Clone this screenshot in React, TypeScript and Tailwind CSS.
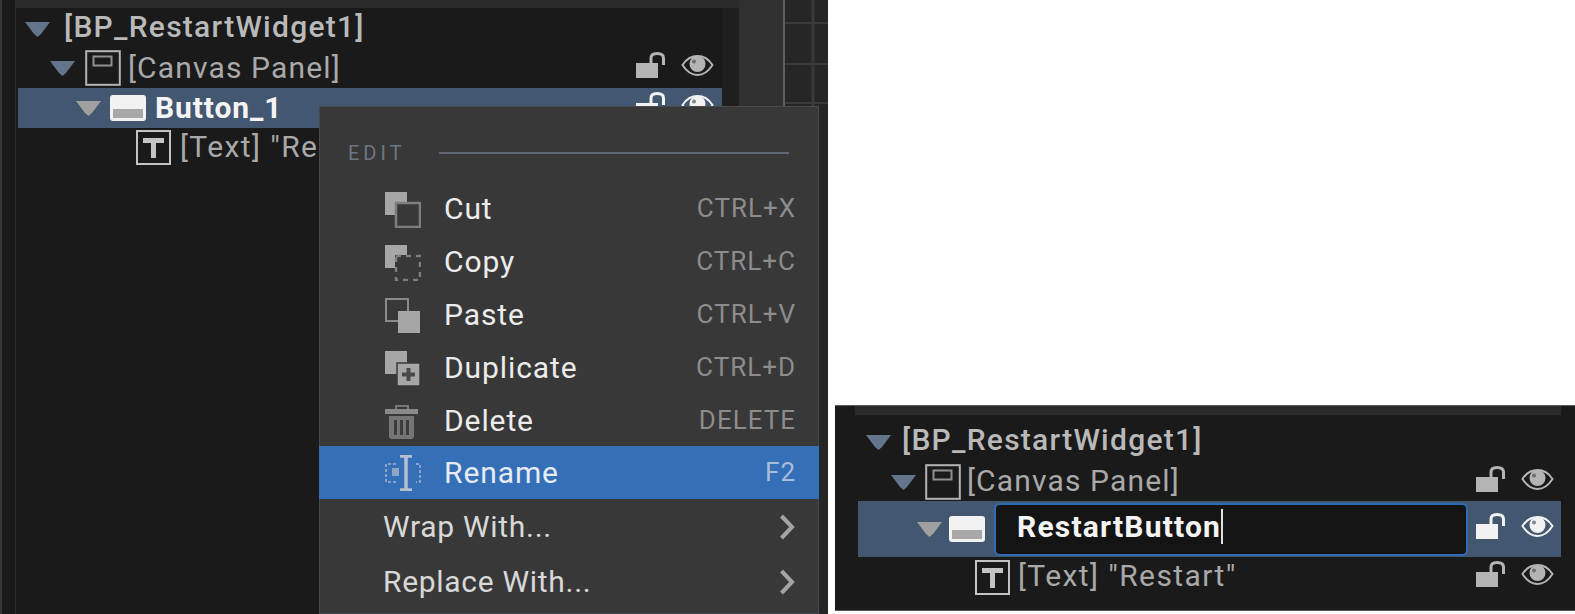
import React from "react";

const Tri = ({ c = "#64748a", w = 25 }: { c?: string; w?: number }) => (
  <svg width={w} height={16} viewBox="0 0 25 16" className="shrink-0">
    <path d="M0 1h25L16 13l-3.500 3L9 13z" fill={c} />
  </svg>
);

const CanvasIcon = ({ w = 36, h = 36 }: { w?: number; h?: number }) => (
  <svg width={w} height={h} viewBox="0 0 36 36" className="shrink-0">
    <rect x="1.200" y="1.200" width="33.600" height="33.600" fill="none" stroke="#b4b4b4" strokeWidth="2" />
    <rect x="8.500" y="6.500" width="18" height="9" fill="none" stroke="#8f8f8f" strokeWidth="2" />
  </svg>
);

const ButtonIcon = ({ w = 36, h = 26 }: { w?: number; h?: number }) => (
  <svg width={w} height={h} viewBox="0 0 36 26" className="shrink-0">
    <rect x="0" y="0" width="36" height="26" rx="3" fill="#f2f2f2" />
    <path d="M3 14h30v9H3z" fill="#a8a8a8" />
  </svg>
);

const TextIcon = ({ w = 35, h = 35 }: { w?: number; h?: number }) => (
  <svg width={w} height={h} viewBox="0 0 35 35" className="shrink-0">
    <rect x="1" y="1" width="33" height="33" fill="none" stroke="#c4c4c4" strokeWidth="2" />
    <path d="M7 8h21v5h-8v15h-5V13H7z" fill="#c4c4c4" />
  </svg>
);

const Lock = ({ c = "#b4b4b4" }: { c?: string }) => (
  <svg width={30} height={26} viewBox="0 0 30 26" className="shrink-0">
    <rect x="0" y="11" width="22" height="15" fill={c} />
    <path d="M15 11V6C15 3 17 1.500 21 1.500S27.500 3 27.500 6V13" fill="none" stroke={c} strokeWidth="3" />
  </svg>
);

const Eye = ({ c = "#b4b4b4", hl = false }: { c?: string; hl?: boolean }) => (
  <svg width={33} height={24} viewBox="0 0 33 24" className="shrink-0">
    <path d="M1.500 12C6 5 11 3 16.500 3S27 5 31.500 12C27 19 22 22 16.500 22S6 19 1.500 12z" fill="none" stroke={c} strokeWidth="2" />
    <circle cx="16.500" cy="11" r="8" fill={c} />
    <circle cx="13" cy="8.500" r="2" fill={hl ? "#7b8794" : "#6e6e6e"} />
  </svg>
);

const Toggles = ({ c, hl }: { c?: string; hl?: boolean }) => (
  <div className="mb-[6px] flex items-center gap-[15px]">
    <Lock c={c} />
    <Eye c={c} hl={hl} />
  </div>
);

const CutIcon = () => (
  <svg width={36} height={36} viewBox="0 0 36 36">
    <rect x="0" y="0" width="22" height="23" fill="#a6a6a6" />
    <rect x="11" y="11" width="24" height="24" fill="#383838" stroke="#7e7e7e" strokeWidth="2.500" />
  </svg>
);
const CopyIcon = () => (
  <svg width={36} height={36} viewBox="0 0 36 36">
    <path d="M0 0h22v10H10v13H0z" fill="#a6a6a6" />
    <rect x="11" y="11" width="24" height="24" fill="none" stroke="#7e7e7e" strokeWidth="2.500" strokeDasharray="5 5" />
  </svg>
);
const PasteIcon = () => (
  <svg width={36} height={36} viewBox="0 0 36 36">
    <path d="M13 23H1V1h22v12" fill="none" stroke="#8a8a8a" strokeWidth="2" />
    <rect x="13" y="13" width="22" height="22" fill="#a6a6a6" />
  </svg>
);
const DuplicateIcon = () => (
  <svg width={36} height={36} viewBox="0 0 36 36">
    <rect x="0" y="0" width="22" height="23" fill="#a6a6a6" />
    <rect x="12" y="12" width="23" height="23" fill="#a6a6a6" stroke="#383838" strokeWidth="1.500" />
    <path d="M21.500 17h4v4.500H30v4h-4.500V30h-4v-4.500H17v-4h4.500z" fill="#4a4a4a" />
  </svg>
);
const TrashIcon = () => (
  <svg width={36} height={36} viewBox="0 0 36 36">
    <path d="M11 5V2h12v3" fill="none" stroke="#777" strokeWidth="2" />
    <rect x="0" y="5" width="33" height="5" fill="#8a8a8a" />
    <path d="M4 12h25v21l-2 2H6l-2-2z" fill="#757575" />
    <path d="M9 16h3v15H9zM15 16h3v15h-3zM21 16h3v15h-3z" fill="#3c3c3c" />
  </svg>
);
const RenameIcon = () => (
  <svg width={36} height={36} viewBox="0 0 36 36">
    <path d="M15 1h12M15 35h12M21 1v34" fill="none" stroke="#b5c0cf" strokeWidth="3.500" />
    <path d="M11 9H1v18h10" fill="none" stroke="#a5b4c8" strokeWidth="1.500" strokeDasharray="3 2" />
    <path d="M31 9h4v18h-4" fill="none" stroke="#a5b4c8" strokeWidth="1.500" strokeDasharray="3 2" />
    <rect x="7" y="13" width="7" height="8" fill="#8fa5c4" />
  </svg>
);

const Chevron = () => (
  <svg width={16} height={26} viewBox="0 0 16 26">
    <path d="M2.500 2 13 13 2.500 24" fill="none" stroke="#a4a4a4" strokeWidth="4" />
  </svg>
);

const items = [
  { label: "Cut", key: "CTRL+X", icon: <CutIcon /> },
  { label: "Copy", key: "CTRL+C", icon: <CopyIcon /> },
  { label: "Paste", key: "CTRL+V", icon: <PasteIcon /> },
  { label: "Duplicate", key: "CTRL+D", icon: <DuplicateIcon /> },
  { label: "Delete", key: "DELETE", icon: <TrashIcon /> },
];

const GridCanvas = () => (
  <svg width={45} height={614} viewBox="0 0 45 614" className="block shrink-0">
    <rect width="45" height="614" fill="#262626" />
    <path d="M30 0v614" stroke="#3a3a3a" strokeWidth="3" />
    <path d="M0 23h45M0 64h45M0 103h45" stroke="#3a3a3a" strokeWidth="2" />
    <path d="M1 0v614" stroke="#5b5f63" strokeWidth="2" />
  </svg>
);

export default function App() {
  return (
    <div className="flex h-[614px] w-[1575px] overflow-hidden bg-white font-['Roboto',sans-serif]">
      <div className="relative flex h-full w-[828px] shrink-0 bg-[#1a1a1a]">
        <div className="flex h-full w-[739px] shrink-0 flex-col border-l-2 border-[#363636]">
          <div className="ml-[13px] h-[8px] shrink-0 bg-[#2b2b2b]" />
          <div className="ml-[13px] flex flex-1">
            <div className="flex w-[707px] flex-col border-l border-[#2b2b2b] pt-[1px]">
              <div className="flex h-[39px] items-center pl-[9px] text-[30px] font-medium tracking-[1.260px] text-[#b9b9b9]">
                <Tri />
                <span className="mb-[4px] ml-[14px]">[BP_RestartWidget1]</span>
              </div>
              <div className="flex h-[40px] items-center pl-[34px] pr-[8px] text-[30px] tracking-[1.150px] text-[#a9a9a9]">
                <Tri />
                <span className="ml-[10px]"><CanvasIcon /></span>
                <span className="mb-[2px] ml-[7px]">[Canvas Panel]</span>
                <span className="ml-auto"><Toggles /></span>
              </div>
              <div className="ml-[2px] flex h-[40px] items-center bg-[#435870] pl-[58px] pr-[8px] text-[30px] font-bold tracking-[0.900px] text-[#f4f4f4]">
                <Tri c="#a0a0a0" />
                <span className="ml-[9px]"><ButtonIcon /></span>
                <span className="mb-[2px] ml-[9px]">Button_1</span>
                <span className="ml-auto"><Toggles c="#f2f2f2" hl /></span>
              </div>
              <div className="flex h-[38px] items-center pl-[120px] text-[30px] tracking-[1.400px] text-[#a9a9a9]">
                <TextIcon />
                <span className="mb-[2px] ml-[9px] w-[138px] overflow-hidden whitespace-nowrap">[Text] "Restart"</span>
              </div>
            </div>
            <div className="flex-1 bg-[#1f1f1f]" />
          </div>
        </div>
        <div className="h-full w-[44px] shrink-0 bg-[#303030]" />
        <GridCanvas />

        <div className="absolute left-[319px] top-[106px] h-[508px] w-[500px] overflow-hidden bg-[#383838] ring-1 ring-inset ring-[#454a50]">
          <div className="mt-[34px] flex h-[26px] items-center pl-[29px] pr-[30px]">
            <span className="text-[20px] tracking-[4px] text-[#6c7682]">EDIT</span>
            <div className="ml-[33px] h-[2px] flex-1 bg-[#5e6872]" />
          </div>
          <div className="mt-[16px]">
            {items.map((it) => (
              <div key={it.label} className="flex h-[52.800px] items-center pl-[66px] pr-[23px] pt-[4px]">
                <span className="w-[59px]">{it.icon}</span>
                <span className="mb-[3px] text-[30px] tracking-[0.900px] text-[#ececec]">{it.label}</span>
                <span className="mb-[3px] ml-auto text-[26px] tracking-[1px] text-[#8c8c8c]">{it.key}</span>
              </div>
            ))}
            <div className="flex h-[52.800px] items-center bg-[#356fb8] pl-[66px] pr-[23px] pt-[2px]">
              <span className="w-[59px]"><RenameIcon /></span>
              <span className="mb-[2px] text-[30px] tracking-[0.900px] text-[#e6ecf4]">Rename</span>
              <span className="mb-[2px] ml-auto text-[26px] tracking-[1px] text-[#a9bdd8]">F2</span>
            </div>
            <div className="flex h-[54px] items-center pl-[64px] pr-[24px] pt-[2px]">
              <span className="text-[30px] tracking-[0.700px] text-[#d8d8d8]">Wrap With...</span>
              <span className="ml-auto flex"><Chevron /></span>
            </div>
            <div className="flex h-[55px] items-center pl-[64px] pr-[24px] pt-[4px]">
              <span className="mb-[2px] text-[30px] tracking-[0.700px] text-[#d8d8d8]">Replace With...</span>
              <span className="ml-auto flex"><Chevron /></span>
            </div>
          </div>
        </div>
      </div>

      <div className="flex flex-1 flex-col justify-end pb-[3px] pl-[7px]">
        <div className="flex h-[206px] w-[740px] flex-col border-y border-[#5a5a5a] bg-[#1a1a1a]">
          <div className="ml-[20px] mr-[14px] h-[9px] shrink-0 bg-[#2b2b2b]" />
          <div className="mt-[6px] flex h-[41px] items-center pl-[31px] text-[30px] font-medium tracking-[1.260px] text-[#b9b9b9]">
            <Tri />
            <span className="mb-[4px] ml-[11px]">[BP_RestartWidget1]</span>
          </div>
          <div className="flex h-[39px] items-center pl-[56px] pr-[21px] text-[30px] tracking-[1.150px] text-[#a9a9a9]">
            <Tri />
            <span className="ml-[9px]"><CanvasIcon /></span>
            <span className="mb-[2px] ml-[6px]">[Canvas Panel]</span>
            <span className="ml-auto"><Toggles /></span>
          </div>
          <div className="ml-[23px] mr-[14px] flex h-[56px] items-center bg-[#435870] pl-[59px] pr-[7px]">
            <Tri c="#a0a0a0" />
            <span className="ml-[7px]"><ButtonIcon /></span>
            <div className="ml-[9px] flex h-[53px] w-[474px] items-center rounded-[6px] border-2 border-[#2d6bb5] bg-[#141414] pb-[5px] pl-[21px] text-[30px] font-bold tracking-[1.200px] text-[#f4f4f4]">
              RestartButton
              <span className="h-[35px] w-[1.500px] bg-[#e0e0e0]" />
            </div>
            <span className="ml-auto"><Toggles c="#f2f2f2" hl /></span>
          </div>
          <div className="flex h-[40px] items-center pl-[140px] pr-[21px] text-[30px] tracking-[1.400px] text-[#a9a9a9]">
            <TextIcon />
            <span className="mb-[3px] ml-[8px]">[Text] "Restart"</span>
            <span className="ml-auto"><Toggles /></span>
          </div>
        </div>
      </div>
    </div>
  );
}
